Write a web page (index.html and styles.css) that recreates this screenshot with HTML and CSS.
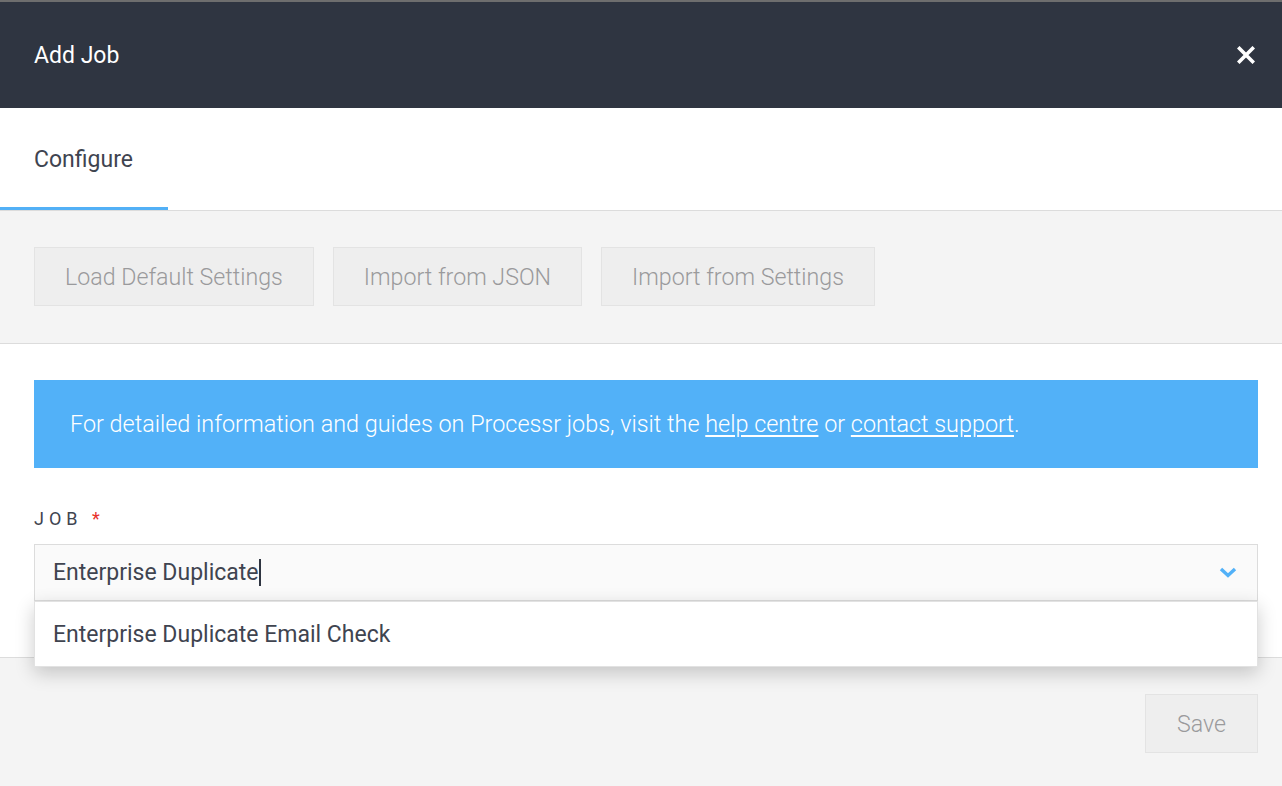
FILE: index.html
```html
<!DOCTYPE html>
<html>
    <head>
        <title>Add Job</title>
        <link rel="stylesheet" href="styles.css">
    </head>
    <body>
        <div class="top-strip"></div>
        <header class="modal-head">
            <h1>Add Job</h1>
            <button class="close-button" aria-label="Close">
                <svg width="18" height="18" viewBox="0 0 18 18">
                    <path d="M2.5 2.5 L15.5 15.5 M15.5 2.5 L2.5 15.5" stroke="#fff" stroke-width="3.6" stroke-linecap="square"/>
                </svg>
            </button>
        </header>

        <nav class="tabs">
            <div class="tab active">Configure</div>
        </nav>

        <div class="toolbar">
            <button class="grey-button">Load Default Settings</button>
            <button class="grey-button">Import from JSON</button>
            <button class="grey-button">Import from Settings</button>
        </div>

        <section class="content">
            <div class="info-box">
                <p>For detailed information and guides on Processr jobs, visit the <a href="#">help centre</a> or <a href="#">contact support</a>.</p>
            </div>

            <label class="field-label">JOB <span class="required">*</span></label>
            <div class="select-wrap">
                <div class="select-input">
                    <span class="typed">Enterprise Duplicate</span><span class="caret"></span>
                    <svg class="chevron" width="18" height="11" viewBox="0 0 18 11">
                        <path d="M2 2 L9 8.5 L16 2" fill="none" stroke="#52b1f8" stroke-width="3.4"/>
                    </svg>
                </div>
                <!-- Autocomplete menu -->
                <ul class="dropdown">
                    <li>Enterprise Duplicate Email Check</li>
                </ul>
            </div>
        </section>

        <footer class="modal-foot">
            <button class="grey-button save">Save</button>
        </footer>
    </body>
</html>
```

FILE: styles.css
```css
body {
    margin: 0;
    background: #f4f4f4;
    font-family: Roboto, "Liberation Sans", sans-serif;
    color: #3f4450;
    display: flex;
    flex-direction: column;
    min-height: 786px;
}

.top-strip {
    height: 2px;
    background: #6e6e6e;
}

.modal-head {
    height: 106px;
    background: #2f3541;
    display: flex;
    justify-content: space-between;
    align-items: center;
    padding: 0 27px 0 34px;
}

    .modal-head h1 {
        margin: 0;
        font-size: 23px;
        font-weight: 400;
        color: #fff;
    }

    .close-button {
        background: none;
        border: none;
        padding: 0;
        width: 18px;
        height: 18px;
        display: flex;
    }

.tabs {
    height: 102px;
    background: #fff;
    border-bottom: 1px solid #dcdcdc;
    display: flex;
}

    .tab {
        display: flex;
        align-items: center;
        padding: 3px 35px 0 34px;
        font-size: 23px;
        color: #3f4450;
        border-bottom: 3px solid transparent;
    }

    .tab.active {
        border-bottom-color: #52b0f6;
    }

.toolbar {
    display: flex;
    gap: 19px;
    padding: 36px 34px 37px;
    border-bottom: 1px solid #dcdcdc;
}

.grey-button {
    height: 59px;
    padding: 0 30px;
    background: #eeeeee;
    border: 1px solid #e3e3e3;
    font-family: Roboto, "Liberation Sans", sans-serif;
    font-size: 23.2px;
    font-weight: 300;
    color: #9a9a9c;
}

.content {
    background: #fff;
    padding: 36px 24px 56px 34px;
    border-bottom: 1px solid #dcdcdc;
}

    .info-box {
        height: 88px;
        box-sizing: border-box;
        background: #52b1f8;
        color: #fff;
        padding: 0 36px;
        display: flex;
        align-items: center;
    }

    .info-box p {
        margin: 0;
        font-size: 23.4px;
        font-weight: 300;
    }

    .info-box a {
        color: #fff;
        text-decoration: underline;
        text-underline-offset: 3px;
    }

    .field-label {
        display: block;
        margin-top: 40px;
        font-size: 18px;
        letter-spacing: 5px;
        line-height: 22px;
        color: #3f4450;
    }

    .required {
        color: #e8302b;
        letter-spacing: 0;
    }

    .select-wrap {
        position: relative;
        margin-top: 14px;
    }

    .select-input {
        height: 55px;
        background: #fafafa;
        border: 1px solid #dcdcdc;
        display: flex;
        align-items: center;
        padding: 0 20px 0 18px;
        font-size: 23px;
        color: #3f4450;
    }

    .caret {
        width: 2px;
        height: 27px;
        background: #2f3541;
    }

    .chevron {
        margin-left: auto;
    }

    .dropdown {
        position: absolute;
        top: 57px;
        left: 0;
        right: 0;
        margin: 0;
        padding: 0;
        list-style: none;
        background: #fff;
        border: 1px solid #e2e2e2;
        box-shadow: 0 6px 18px rgba(0, 0, 0, 0.2);
        z-index: 10;
    }

    .dropdown li {
        height: 64px;
        display: flex;
        align-items: center;
        padding-left: 18px;
        font-size: 23px;
        color: #3f4450;
    }

.modal-foot {
    display: flex;
    justify-content: flex-end;
    padding: 36px 24px;
}

    .save {
        padding: 0 31px;
    }
```
